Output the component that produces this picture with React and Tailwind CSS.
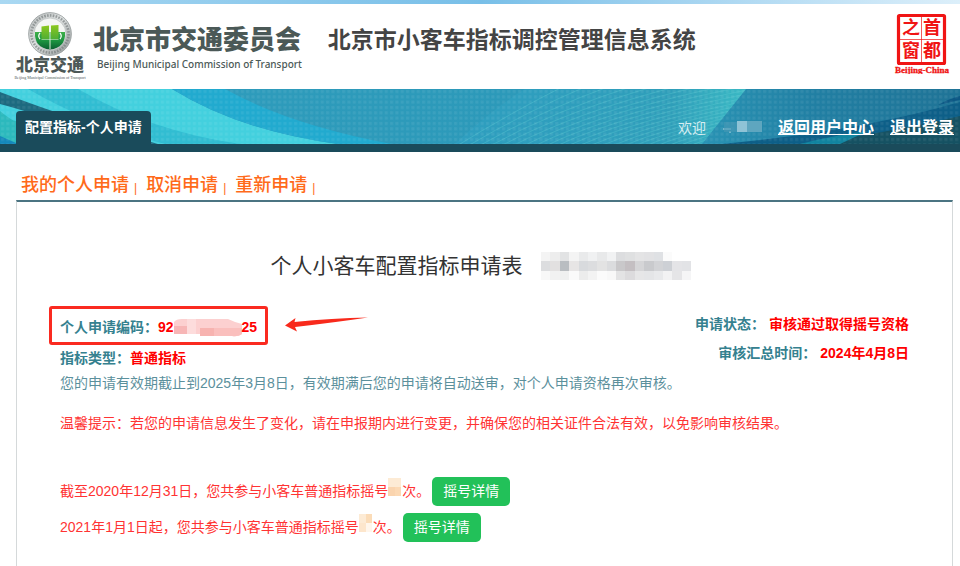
const CJK = "font-['Liberation_Sans','Noto_Sans_CJK_SC',sans-serif]";

const navLinks = ['我的个人申请', '取消申请', '重新申请'];

const drawRecords = [
  { period: '截至2020年12月31日', cells: ['#fdebd5', '#fdebd5', '#fad4ae', '#fcd9b4'] },
  { period: '2021年1月1日起', cells: ['#fdebd5', '#fbdcb8', '#fde6cc', '#fff6ec'] },
];

const titleCells = [
  ['#f4f4f4', '#ededed', '#e2e3e4', '#f4f4f4', '#e9eaeb', '#f0f1f2', '#e8e9ea', '#f1f2f3', '#dcdddf', '#dfe0e1', '#e4e4e5', '#e2e2e4', '#dfe1e4', '#fbfbfb', '#ffffff', '#ffffff'],
  ['#dcdddf', '#e2e0e0', '#b9bdc1', '#e7e5e5', '#d8dadd', '#dcdddf', '#e3e3e3', '#dbdcde', '#c9c8ca', '#c4bfc2', '#d5d5d7', '#c9cacd', '#d2d3d6', '#cdd0d5', '#e4e4e7', '#e2e3e6'],
  ['#f8f8f8', '#f1f1f1', '#eff0f0', '#fafafa', '#ececec', '#f3f3f3', '#fbfbfb', '#f8f8f8', '#e3e3e4', '#dcdbdd', '#e6e6e7', '#e4e5e7', '#e8e9eb', '#f2f2f3', '#e5e5e7', '#f5f5f6'],
];

function Emblem() {
  return (
    <svg className="h-11 w-11" viewBox="0 0 44 44" aria-hidden="true">
      <defs>
        <linearGradient id="ring" x1="0" y1="0" x2="1" y2="1">
          <stop offset="0%" stopColor="#b4b9b9" />
          <stop offset="45%" stopColor="#dfe2e2" />
          <stop offset="100%" stopColor="#8f9595" />
        </linearGradient>
        <linearGradient id="bowl" x1="0" y1="0" x2="0" y2="1">
          <stop offset="0%" stopColor="#3fb04a" />
          <stop offset="50%" stopColor="#1c9440" />
          <stop offset="100%" stopColor="#0a5f30" />
        </linearGradient>
        <linearGradient id="gate" x1="0" y1="0" x2="0" y2="1">
          <stop offset="0%" stopColor="#8cc81e" />
          <stop offset="100%" stopColor="#4fae34" />
        </linearGradient>
      </defs>
      <circle cx="22" cy="22" r="21.4" fill="url(#ring)" stroke="#969c9c" strokeWidth="0.8" />
      <circle cx="22" cy="22" r="18.6" fill="none" stroke="#737a7a" strokeWidth="2.6" strokeDasharray="1.6 1.3" opacity="0.65" />
      <circle cx="22" cy="22" r="16" fill="#f4f6f4" stroke="#b0b5b5" strokeWidth="0.6" />
      <path d="M7 20 H37 Q38 36 22 37.5 Q6 36 7 20 Z" fill="url(#bowl)" />
      <path d="M13.5 14.5 L21 13.5 V27 H13.5 Z" fill="url(#gate)" />
      <path d="M30.5 13 L23 13.5 V27 H30.5 Z" fill="url(#gate)" />
      <path d="M12 21 Q9.5 24 12 27 M32 21 Q34.5 24 32 27" fill="none" stroke="#ffffff" strokeWidth="1.2" />
      <path d="M13.5 27.5 H30.5" stroke="#d3edc0" strokeWidth="0.6" />
      <path d="M22 13 V37" stroke="#eef8e4" strokeWidth="0.9" />
    </svg>
  );
}

function CapitalSeal() {
  return (
    <svg className="h-[66px] w-[58px]" viewBox="0 0 58 66" role="img" aria-label="首都之窗">
      <rect x="4.5" y="7.5" width="46" height="48" rx="1" fill="#ffffff" stroke="#f01414" strokeWidth="3.2" />
      <path d="M27.5 9 V54 M6 31.5 H50" stroke="#f01414" strokeWidth="0.7" />
      <g fill="#f01414" fontFamily="'Liberation Sans', 'Noto Sans CJK SC', sans-serif" fontSize="18" fontWeight="700" textAnchor="middle">
        <text x="17" y="26">之</text>
        <text x="38" y="26">首</text>
        <text x="17" y="49">窗</text>
        <text x="38" y="49">都</text>
      </g>
      <text x="28" y="65" fill="#f01414" stroke="#f01414" strokeWidth="0.3" fontFamily="'Liberation Serif', serif" fontSize="9" fontWeight="700" textAnchor="middle">Beijing-China</text>
    </svg>
  );
}

function BannerArt() {
  const rays = Array.from({ length: 22 }, (_, i) => i);
  return (
    <svg className="absolute inset-0 h-full w-full" viewBox="0 0 960 55" preserveAspectRatio="none" aria-hidden="true">
      <defs>
        <linearGradient id="sea" x1="0" x2="1">
          <stop offset="0%" stopColor="#2f9dbd" />
          <stop offset="70%" stopColor="#2b98b8" />
          <stop offset="85%" stopColor="#217fa3" />
          <stop offset="100%" stopColor="#1f7396" />
        </linearGradient>
        <linearGradient id="fan" x1="0" x2="1">
          <stop offset="0%" stopColor="#2f9fc0" />
          <stop offset="75%" stopColor="#309fba" />
          <stop offset="100%" stopColor="#3bb9c4" />
        </linearGradient>
        <pattern id="dots" width="5.33" height="5.33" patternUnits="userSpaceOnUse">
          <rect x="1" y="1" width="3" height="3" fill="#ffffff" opacity="0.07" />
        </pattern>
        <clipPath id="fanClip">
          <path d="M455 55 Q490 22 525 0 H746 L702 55 Z" />
        </clipPath>
      </defs>
      <rect width="960" height="55" fill="url(#sea)" />
      <path d="M0 0 H172 Q240 42 338 55 H0 Z" fill="#43d0de" />
      <path d="M28 0 H78 Q150 42 240 55 H165 Q90 36 28 0 Z" fill="#31bdd2" />
      <path d="M0 3 Q70 30 158 55 H110 Q50 28 0 15 Z" fill="#1d6a80" />
      <path d="M0 22 Q12 32 16 32 V55 H0 Z" fill="#2cb9bd" />
      <path d="M0 47 L16 54 V55 H0 Z" fill="#1488bb" />
      <path d="M172 0 H225 Q290 36 392 55 H338 Q240 42 172 0 Z" fill="#21aacf" />
      <path d="M455 55 Q490 22 525 0 H746 L702 55 Z" fill="url(#fan)" />
      <g clipPath="url(#fanClip)" fill="none" stroke="#5ccbd2" strokeWidth="0.9" opacity="0.4">
        {rays.map((i) => (
          <path key={i} d={`M${455 + i * 11} ${58} Q${510 + i * 14} ${24 - i / 2} ${570 + i * 24} ${-6}`} />
        ))}
      </g>
      <path d="M722 55 Q860 42 960 13 V55 Z" fill="#0d5f88" />
      <path d="M800 55 Q890 44 960 27 V55 Z" fill="#155162" />
      <path d="M800 55 Q835 46 868 42 L840 55 Z" fill="#1184a0" />
      <path d="M938 16 Q948 10 960 7 V11 Z" fill="#0c5885" />
      <rect width="960" height="55" fill="url(#dots)" />
    </svg>
  );
}

function Header() {
  return (
    <header className="flex h-[85px] items-start justify-between bg-white pr-2 pl-[14px]">
      <div className="flex">
        <div className="flex w-18 flex-col items-center pt-2 text-[#4d5857]">
          <Emblem />
          <span className="text-[17px] leading-5 font-black">北京交通</span>
          <span className="font-['Liberation_Serif',serif] text-[4px] leading-1 whitespace-nowrap">Beijing Municipal Commission of Transport</span>
        </div>
        <div className="ml-[7px] flex flex-col pt-[18px] text-[#4b5957]">
          <span className="text-[26px] leading-9 font-black whitespace-nowrap">北京市交通委员会</span>
          <span className="pl-1 font-['Noto_Sans',sans-serif] text-[10px] leading-3 font-medium whitespace-nowrap">Beijing Municipal Commission of Transport</span>
        </div>
        <h1 className="ml-[26px] pt-[18px] text-[23px] leading-9 font-bold whitespace-nowrap text-[#444444]">北京市小客车指标调控管理信息系统</h1>
      </div>
      <div className="pt-1">
        <CapitalSeal />
      </div>
    </header>
  );
}

function Banner() {
  return (
    <div className="relative border-b-8 border-[#1a4b5b]">
      <BannerArt />
      <div className="relative flex h-[55px] items-end justify-between pr-[6px] pl-4">
        <div className="rounded-t bg-[#1a4b5b] px-[9px] text-[14px] leading-[33px] font-bold text-white">配置指标-个人申请</div>
        <div className="flex items-center pb-1 leading-6 text-white">
          <span className="text-[14px] text-[#d5edf2]">欢迎</span>
          <svg className="ml-4 h-4 w-10" viewBox="0 0 40 16" aria-hidden="true">
            <path d="M1 9 H9 M7 12 H9" stroke="#b9d9e3" />
            <rect x="2" y="2" width="14" height="10" fill="#4a9ab6" opacity="0.6" />
            <rect x="15" y="1" width="10" height="11" fill="#8fc3d6" />
            <rect x="25" y="1" width="15" height="11" fill="#5ea6bf" />
          </svg>
          <a href="#center" className="ml-4 text-[16px] font-bold underline">返回用户中心</a>
          <a href="#logout" className="ml-4 text-[16px] font-bold underline">退出登录</a>
        </div>
      </div>
    </div>
  );
}

function ApplicationSummary() {
  return (
    <div className="mt-[26px] flex justify-between text-[14px] font-bold text-[#35818f]">
      <div>
        <div className="flex">
          <div className="-ml-[11px] flex h-[39px] items-center rounded-[3px] border-3 border-[#fa2a20] px-2 pt-1">
            <span>个人申请编码：</span>
            <span className="flex items-center text-[#ff0000]">
              92
              <svg className="h-5 w-[68px]" viewBox="0 0 68 20" aria-hidden="true">
                <path d="M0 4 Q2 1 8 1 H54 Q60 4 68 6 V16 Q64 19 58 18 H30 L26 16 H0 Z" fill="#fcd0d0" />
                <rect y="8" width="13" height="8" fill="#f7b6b6" />
                <rect x="13" y="1" width="9" height="15" fill="#fddcdc" />
                <rect x="26" y="10" width="14" height="8" fill="#f7b3b0" />
                <path d="M40 10 H68 V16 Q64 19 58 18 H40 Z" fill="#fabfbd" />
              </svg>
              25
            </span>
          </div>
          <svg className="mt-[10px] ml-4 h-4 w-[86px]" viewBox="0 0 86 16" aria-hidden="true">
            <path d="M1 9.5 L11.5 2 L10.5 6 Q48 2 84 1.5 Q50 6.5 11 11 L13 15.5 Z" fill="#f82a1c" />
          </svg>
        </div>
        <p className="leading-[26px]">
          指标类型：<span className="text-[#ff0000]">普通指标</span>
        </p>
      </div>
      <dl className="flex flex-col items-end pt-1 leading-[29px]">
        <div className="flex gap-1">
          <dt>申请状态：</dt>
          <dd className="text-[#ff0000]">审核通过取得摇号资格</dd>
        </div>
        <div className="flex gap-1">
          <dt>审核汇总时间：</dt>
          <dd className="text-[#ff0000]">2024年4月8日</dd>
        </div>
      </dl>
    </div>
  );
}

function DrawRecord({ period, cells }) {
  return (
    <li className="flex h-[29px] items-center">
      <span>{period}，您共参与小客车普通指标摇号</span>
      <svg className="mb-2 h-5 w-[14px]" viewBox="0 0 14 20" aria-hidden="true">
        <rect width="7" height="9" fill={cells[0]} />
        <rect x="7" width="6" height="9" fill={cells[1]} />
        <rect y="9" width="7" height="9" fill={cells[2]} />
        <rect x="7" y="9" width="6" height="9" fill={cells[3]} />
      </svg>
      <span>次。</span>
      <button type="button" className="ml-[2px] h-[29px] rounded-[5px] bg-[#22c159] px-[11px] text-white">摇号详情</button>
    </li>
  );
}

export default function App() {
  return (
    <div lang="zh-CN" className={`flex min-h-screen flex-col bg-white ${CJK}`}>
      <div className="h-1 bg-linear-to-r from-[#a9d8f2] via-[#78bfe8] to-[#dceffa]" />
      <Header />
      <Banner />
      <nav className="flex px-[21px] pt-5 pb-[2px] text-[#ff6a1a]">
        {navLinks.map((label) => (
          <span key={label} className="mr-[9px] flex h-[26px] items-center">
            <a href="#apply" className="text-[18px] leading-[26px] font-medium">{label}</a>
            <span className="ml-[5px] self-end text-[12px] leading-5">|</span>
          </span>
        ))}
      </nav>
      <main className="mr-[7px] ml-4 flex-1 border-x border-t-2 border-x-[#d5d9da] border-t-[#4b7482] px-[43px] pt-[50px]">
        <div className="flex items-center justify-center gap-[18px] pr-2">
          <h2 className="text-[21px] leading-7 text-[#333333]">个人小客车配置指标申请表</h2>
          <svg className="h-7 w-[150px]" viewBox="0 0 16 3" preserveAspectRatio="none" shapeRendering="crispEdges" aria-hidden="true">
            {titleCells.map((row, y) => row.map((fill, x) => <rect key={`${x}-${y}`} x={x} y={y} width="1" height="1" fill={fill} />))}
          </svg>
        </div>
        <ApplicationSummary />
        <p className="text-[14px] leading-6 text-[#5b909c]">您的申请有效期截止到2025年3月8日，有效期满后您的申请将自动送审，对个人申请资格再次审核。</p>
        <p className="mt-4 text-[14px] leading-6 text-[#ff3333]">温馨提示：若您的申请信息发生了变化，请在申报期内进行变更，并确保您的相关证件合法有效，以免影响审核结果。</p>
        <ul className="mt-[42px] flex flex-col gap-[7px] text-[14px] text-[#ff3333]">
          {drawRecords.map((record) => (
            <DrawRecord key={record.period} {...record} />
          ))}
        </ul>
      </main>
    </div>
  );
}
